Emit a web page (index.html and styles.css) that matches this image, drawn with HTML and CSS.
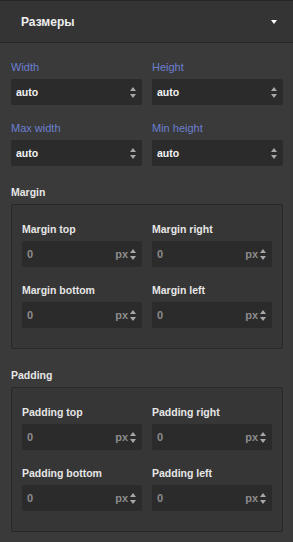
FILE: index.html
```html
<!DOCTYPE html>
<html lang="ru">
<head>
    <meta charset="UTF-8">
    <meta name="viewport" content="width=device-width, initial-scale=1.0">
    <title>Размеры</title>
    <link rel="stylesheet" href="styles.css">
</head>
<body>
    <div class="panel">
        <div class="panel-header">
            <span class="panel-title">Размеры</span>
            <span class="caret"></span>
        </div>

        <div class="panel-body">
            <div class="grid">
                <div class="field">
                    <label class="label label-blue">Width</label>
                    <div class="input"><span class="value">auto</span><span class="spin"></span></div>
                </div>
                <div class="field">
                    <label class="label label-blue">Height</label>
                    <div class="input"><span class="value">auto</span><span class="spin"></span></div>
                </div>
                <div class="field">
                    <label class="label label-blue">Max width</label>
                    <div class="input"><span class="value">auto</span><span class="spin"></span></div>
                </div>
                <div class="field">
                    <label class="label label-blue">Min height</label>
                    <div class="input"><span class="value">auto</span><span class="spin"></span></div>
                </div>
            </div>

            <div class="group-title">Margin</div>
            <div class="group">
                <div class="grid">
                    <div class="field">
                        <label class="label">Margin top</label>
                        <div class="input"><span class="value num">0</span><span class="unit">px</span><span class="spin"></span></div>
                    </div>
                    <div class="field">
                        <label class="label">Margin right</label>
                        <div class="input"><span class="value num">0</span><span class="unit">px</span><span class="spin"></span></div>
                    </div>
                    <div class="field">
                        <label class="label">Margin bottom</label>
                        <div class="input"><span class="value num">0</span><span class="unit">px</span><span class="spin"></span></div>
                    </div>
                    <div class="field">
                        <label class="label">Margin left</label>
                        <div class="input"><span class="value num">0</span><span class="unit">px</span><span class="spin"></span></div>
                    </div>
                </div>
            </div>

            <div class="group-title">Padding</div>
            <div class="group">
                <div class="grid">
                    <div class="field">
                        <label class="label">Padding top</label>
                        <div class="input"><span class="value num">0</span><span class="unit">px</span><span class="spin"></span></div>
                    </div>
                    <div class="field">
                        <label class="label">Padding right</label>
                        <div class="input"><span class="value num">0</span><span class="unit">px</span><span class="spin"></span></div>
                    </div>
                    <div class="field">
                        <label class="label">Padding bottom</label>
                        <div class="input"><span class="value num">0</span><span class="unit">px</span><span class="spin"></span></div>
                    </div>
                    <div class="field">
                        <label class="label">Padding left</label>
                        <div class="input"><span class="value num">0</span><span class="unit">px</span><span class="spin"></span></div>
                    </div>
                </div>
            </div>
        </div>
    </div>
</body>
</html>
```

FILE: styles.css
```css
:root {
    --bg: #3a3a3a;
    --header-bg: #343434;
    --line-dark: #262626;
    --input-bg: #2b2b2b;
    --group-bg: #363636;
    --group-border: #282828;
    --text-light: #e6e6e6;
    --text-muted: #8c8c8c;
    --label-blue: #6b7fd0;
}

html, body {
    margin: 0;
    padding: 0;
    height: 100%;
}

body {
    font-family: 'Liberation Sans', Arial, sans-serif;
    background-color: var(--bg);
    color: var(--text-light);
}

.panel {
    width: 293px;
}

.panel-header {
    height: 41px;
    background-color: var(--header-bg);
    border-top: 1px solid var(--line-dark);
    border-bottom: 1px solid var(--line-dark);
    display: flex;
    align-items: center;
    justify-content: space-between;
    padding: 0 16px 0 21px;
}

.panel-title {
    font-size: 12px;
    font-weight: 700;
    color: #eeeeee;
}

.caret {
    width: 0;
    height: 0;
    border-left: 3.5px solid transparent;
    border-right: 3.5px solid transparent;
    border-top: 4px solid #ffffff;
}

.panel-body {
    padding: 17px 10px 12px 11px;
}

.grid {
    display: grid;
    grid-template-columns: 1fr 1fr;
    column-gap: 10px;
    row-gap: 16px;
}

.field {
    display: flex;
    flex-direction: column;
    gap: 5px;
}

.label {
    font-size: 10.5px;
    font-weight: 700;
    line-height: 14px;
    color: var(--text-light);
}

.label-blue {
    font-size: 11px;
    font-weight: 400;
    color: var(--label-blue);
}

.input {
    height: 26px;
    background-color: var(--input-bg);
    border-radius: 2px;
    display: flex;
    align-items: center;
    padding: 0 5px;
}

.value {
    flex: 1;
    font-size: 10.5px;
    font-weight: 700;
    color: #f4f4f4;
}

.value.num {
    color: var(--text-muted);
    font-size: 11px;
}

.unit {
    font-size: 11px;
    font-weight: 700;
    color: var(--text-muted);
    margin-right: 2px;
}

/* up/down spinner arrows */
.spin {
    width: 7px;
    height: 11px;
    position: relative;
}

.spin::before,
.spin::after {
    content: '';
    position: absolute;
    left: 0;
    border-left: 3.5px solid transparent;
    border-right: 3.5px solid transparent;
}

.spin::before {
    top: 0;
    border-bottom: 4px solid #a8a8a8;
}

.spin::after {
    bottom: 0;
    border-top: 4px solid #a8a8a8;
}

.group-title {
    font-size: 10.5px;
    font-weight: 700;
    line-height: 14px;
    color: var(--text-light);
    margin: 19px 0 5px;
}

.group {
    background-color: var(--group-bg);
    border: 1px solid var(--group-border);
    border-radius: 2px;
    padding: 17px 10px 20px;
}
```
